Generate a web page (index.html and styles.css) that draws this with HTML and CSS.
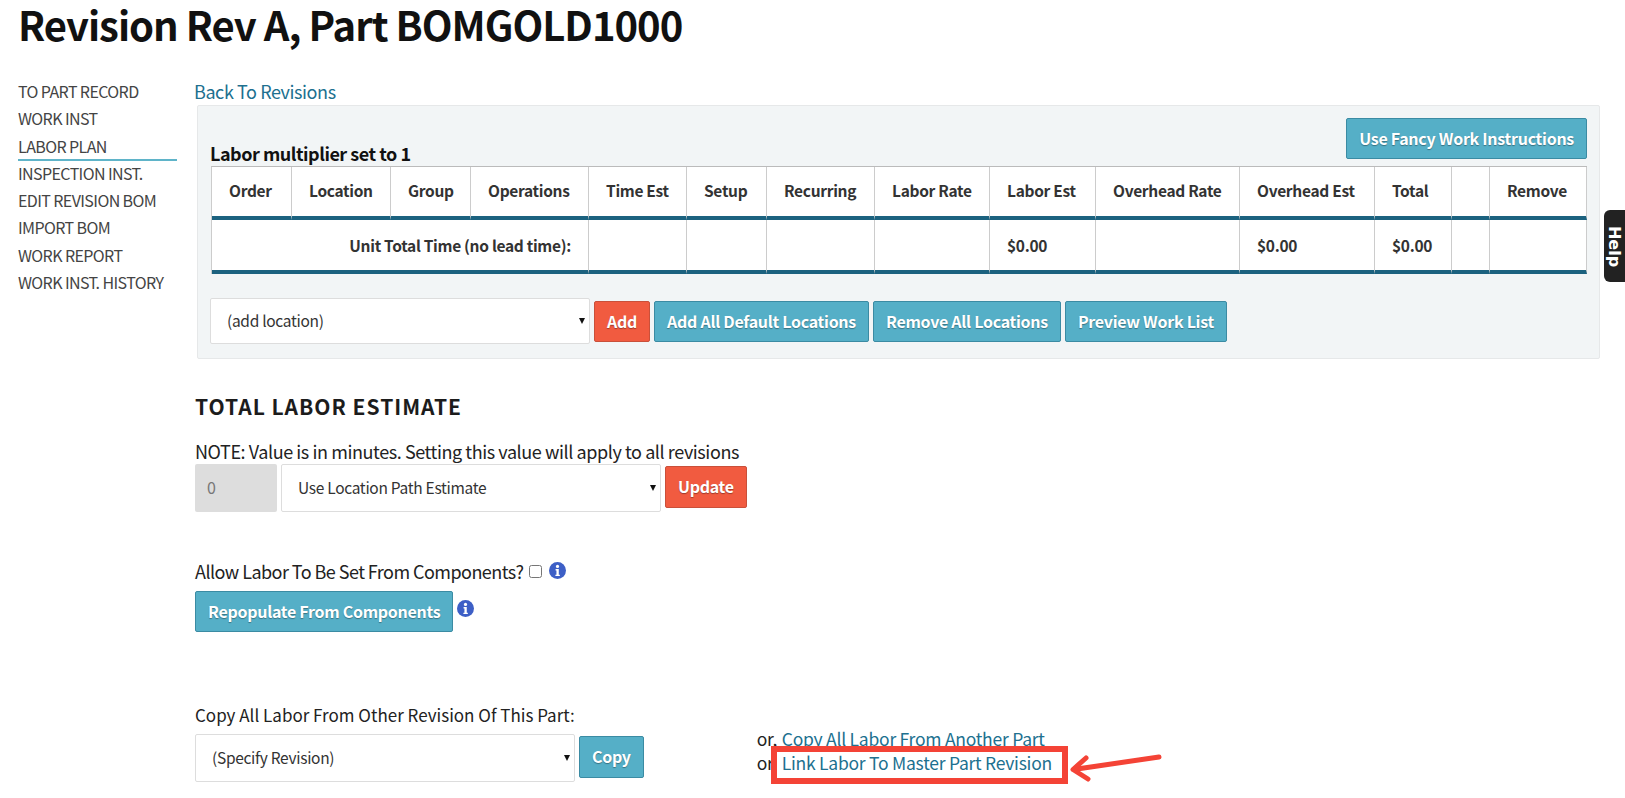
FILE: index.html
```html
<!DOCTYPE html>
<html lang="en">
<head>
<meta charset="utf-8">
<title>Revision Rev A, Part BOMGOLD1000</title>
<link rel="stylesheet" href="styles.css">
</head>
<body>
<h1 class="title">Revision Rev A, Part BOMGOLD1000</h1>
<div class="layout">
  <nav class="side">
    <a href="#">TO PART RECORD</a>
    <a href="#">WORK INST</a>
    <a href="#" class="active">LABOR PLAN</a>
    <a href="#">INSPECTION INST.</a>
    <a href="#">EDIT REVISION BOM</a>
    <a href="#">IMPORT BOM</a>
    <a href="#">WORK REPORT</a>
    <a href="#">WORK INST. HISTORY</a>
  </nav>
  <main class="main">
    <a href="#" class="link back">Back To Revisions</a>
    <section class="panel">
      <div class="panel-head">
        <strong class="mult">Labor multiplier set to 1</strong>
        <button class="btn blue">Use Fancy Work Instructions</button>
      </div>
      <table class="grid">
        <colgroup>
          <col class="c80"><col class="c99"><col class="c80"><col class="c118"><col class="c98"><col class="c80"><col class="c108"><col class="c115"><col class="c106"><col class="c144"><col class="c135"><col class="c77"><col class="c38"><col class="c97">
        </colgroup>
        <thead>
          <tr><th>Order</th><th>Location</th><th>Group</th><th>Operations</th><th>Time Est</th><th>Setup</th><th>Recurring</th><th>Labor Rate</th><th>Labor Est</th><th>Overhead Rate</th><th>Overhead Est</th><th>Total</th><th></th><th>Remove</th></tr>
        </thead>
        <tbody>
          <tr><td colspan="4" class="right">Unit Total Time (no lead time):</td><td></td><td></td><td></td><td></td><td>$0.00</td><td></td><td>$0.00</td><td>$0.00</td><td></td><td></td></tr>
        </tbody>
      </table>
      <div class="row add-row">
        <span class="sel sel-loc"><select><option>(add location)</option></select></span>
        <button class="btn red">Add</button>
        <button class="btn blue">Add All Default Locations</button>
        <button class="btn blue">Remove All Locations</button>
        <button class="btn blue">Preview Work List</button>
      </div>
    </section>

    <h2 class="heading">TOTAL LABOR ESTIMATE</h2>
    <p class="note">NOTE: Value is in minutes. Setting this value will apply to all revisions</p>
    <div class="row est-row">
      <input class="num" value="0" disabled>
      <span class="sel sel-est"><select><option>Use Location Path Estimate</option></select></span>
      <button class="btn red raised">Update</button>
    </div>

    <div class="allow">
      <span>Allow Labor To Be Set From Components?</span>
      <input type="checkbox" class="check">
      <svg class="info" viewBox="0 0 16 16" aria-hidden="true"><circle cx="8" cy="8" r="8" fill="#3d5fc6"/><circle cx="8" cy="4.2" r="1.5" fill="#fff"/><path d="M6.2 6.7h3v5.2h1v1.3H6v-1.3h1V8H6.2z" fill="#fff"/></svg>
    </div>
    <div class="row repop">
      <button class="btn blue">Repopulate From Components</button>
      <svg class="info info-r" viewBox="0 0 16 16" aria-hidden="true"><circle cx="8" cy="8" r="8" fill="#3d5fc6"/><circle cx="8" cy="4.2" r="1.5" fill="#fff"/><path d="M6.2 6.7h3v5.2h1v1.3H6v-1.3h1V8H6.2z" fill="#fff"/></svg>
    </div>

    <p class="copy-label">Copy All Labor From Other Revision Of This Part:</p>
    <div class="row copy-row">
      <span class="sel sel-rev"><select><option>(Specify Revision)</option></select></span>
      <button class="btn blue raised">Copy</button>
      <div class="alt">
        <div><span class="or">or,</span><a href="#" class="link">Copy All Labor From Another Part</a></div>
        <div><span class="or">or</span><a href="#" class="link">Link Labor To Master Part Revision</a></div>
      </div>
    </div>
  </main>
</div>
<div class="help"><span>Help</span></div>
<div class="callout"></div>
<svg class="arrow" viewBox="0 0 100 40" aria-hidden="true"><path d="M92 11 L10 23" fill="none" stroke="#f44336" stroke-width="5" stroke-linecap="round"/><path d="M19 12 L6 23.5 L21 33" fill="none" stroke="#f44336" stroke-width="5" stroke-linecap="round" stroke-linejoin="round"/></svg>
</body>
</html>
```

FILE: styles.css
```css
* { box-sizing: border-box; }
html, body { margin: 0; padding: 0; }
body {
  position: relative;
  height: 798px;
  overflow: hidden;
  background: #fff;
  color: #222;
  font-family: "Noto Sans CJK SC", "Source Sans Pro", "Open Sans", sans-serif;
  font-size: 17px;
}
.title {
  margin: 0;
  padding-left: 18px;
  height: 79px;
  font-size: 40px;
  line-height: 48px;
  font-weight: 700;
  letter-spacing: -1px;
  color: #111;
}
.layout { display: flex; padding-left: 18px; }
.side { width: 159px; margin-right: 18px; flex: none; display: flex; flex-direction: column; }
.side a {
  display: block;
  height: 27.3px;
  line-height: 25px;
  font-size: 16px;
  letter-spacing: -0.6px;
  color: #444;
  text-decoration: none;
  white-space: nowrap;
}
.side a.active { border-bottom: 2px solid #5fb4c9; }
.main { flex: 1; min-width: 0; }
.link { color: #20708f; text-decoration: none; }
.back { display: block; height: 26px; line-height: 24px; font-size: 18px; letter-spacing: -0.42px; margin-left: -1px; }
.panel {
  width: 1403px;
  height: 254px;
  margin-left: 2px;
  padding: 12px 12px 0 13px;
  background: #f2f5f6;
  border: 1px solid #e6e8e9;
  border-radius: 2px;
}
.panel-head { display: flex; justify-content: space-between; align-items: flex-start; height: 48px; margin-left: -1px; }
.mult { margin-top: 23px; font-size: 18px; letter-spacing: -0.48px; line-height: 24px; font-weight: 700; color: #111; }
.btn {
  height: 41px;
  padding: 0 12px 1px;
  border: 1px solid #3b8ba3;
  border-radius: 2px;
  color: #fff;
  font: 600 16px/1 "Noto Sans CJK SC", "Source Sans Pro", sans-serif;
  letter-spacing: -0.28px;
  text-shadow: 0 1px 1px rgba(0,0,0,.35);
  white-space: nowrap;
  flex: none;
}
.blue { background: #55afc7; }
.red { background: #f15b40; border-color: #c9503a; }
.raised { height: 42px; margin-bottom: 3px; padding-bottom: 2px; }
.grid {
  width: 1376px;
  border-collapse: separate;
  border-spacing: 0;
  table-layout: fixed;
  background: #fff;
  border-top: 1px solid #bbb;
  border-left: 1px solid #ccc;
  font-size: 15.5px;
  letter-spacing: -0.3px;
  color: #333;
}
.grid th, .grid td {
  padding: 0 0 0 17px;
  text-align: left;
  font-weight: 600;
  border-right: 1px solid #ccc;
  border-bottom: 4px solid #1c627f;
  white-space: nowrap;
}
.grid th { height: 53px; padding-bottom: 3px; }
.grid td { height: 54px; padding-bottom: 1px; }
.grid td.right { text-align: right; padding-right: 17px; }
.c99 { width: 99px; } .c80 { width: 80px; } .c118 { width: 118px; }
.c98 { width: 98px; } .c108 { width: 108px; } .c115 { width: 115px; } .c106 { width: 106px; }
.c144 { width: 144px; } .c135 { width: 135px; } .c77 { width: 77px; } .c38 { width: 38px; } .c97 { width: 97px; }
.row { display: flex; align-items: center; }
.add-row { margin: 24px 0 0 -1px; gap: 4px; }
.sel { position: relative; display: block; flex: none; }
.sel select {
  display: block;
  width: 100%;
  height: 100%;
  appearance: none;
  -webkit-appearance: none;
  background: #fff;
  border: 1px solid #ddd;
  border-radius: 2px;
  color: #333;
  font: 400 15.5px "Noto Sans CJK SC", "Source Sans Pro", sans-serif;
  letter-spacing: -0.3px;
  padding: 0 0 2px 16px;
}
.sel::after {
  content: "";
  position: absolute;
  right: 5px;
  top: 50%;
  margin-top: -3px;
  border-left: 3.5px solid transparent;
  border-right: 3.5px solid transparent;
  border-top: 6px solid #111;
}
.sel-loc { width: 380px; height: 46px; }
.heading {
  margin: 32px 0 0;
  font-size: 21px;
  line-height: 30px;
  font-weight: 600;
  letter-spacing: 1px;
  color: #1c1c1c;
}
.note { margin: 18px 0 0; font-size: 18px; letter-spacing: -0.42px; line-height: 25px; }
.est-row { height: 48px; }
.num {
  width: 82px;
  height: 48px;
  padding: 0 0 2px 12px;
  background: #ddd;
  border: 0;
  border-radius: 2px;
  color: #777;
  font: 400 16px "Noto Sans CJK SC", sans-serif;
}
.sel-est { width: 380px; height: 48px; margin: 0 4px 0 4px; }
.allow { display: flex; align-items: flex-start; height: 26px; margin-top: 48px; font-size: 18px; letter-spacing: -0.55px; line-height: 22px; }
.check { width: 13px; height: 13px; margin: 5px 0 0 6px; flex: none; }
.info { width: 17px; height: 17px; flex: none; margin: 2px 0 0 7px; }
.repop { margin-top: 5px; align-items: flex-start; }
.info-r { margin: 9px 0 0 4px; }
.copy-label { margin: 70px 0 0; font-size: 17px; line-height: 26px; }
.copy-row { margin-top: 6px; height: 48px; }
.sel-rev { width: 380px; height: 48px; margin-right: 4px; }
.alt { align-self: flex-start; margin: -7px 0 0 113px; font-size: 17.5px; letter-spacing: -0.25px; line-height: 24px; white-space: nowrap; }
.or { display: inline-block; width: 25px; }
.help {
  position: absolute;
  left: 1604px;
  top: 210px;
  width: 21px;
  height: 72px;
  background: #222;
  border-radius: 6px 0 0 6px;
  display: flex;
  align-items: center;
  justify-content: center;
}
.help span {
  display: block;
  transform: rotate(90deg);
  color: #fff;
  font: 700 16px "DejaVu Sans", sans-serif;
}
.callout {
  position: absolute;
  left: 771px;
  top: 746px;
  width: 297px;
  height: 38px;
  border: 6px solid #f44336;
}
.arrow { position: absolute; left: 1067px; top: 746px; width: 100px; height: 40px; }
```
